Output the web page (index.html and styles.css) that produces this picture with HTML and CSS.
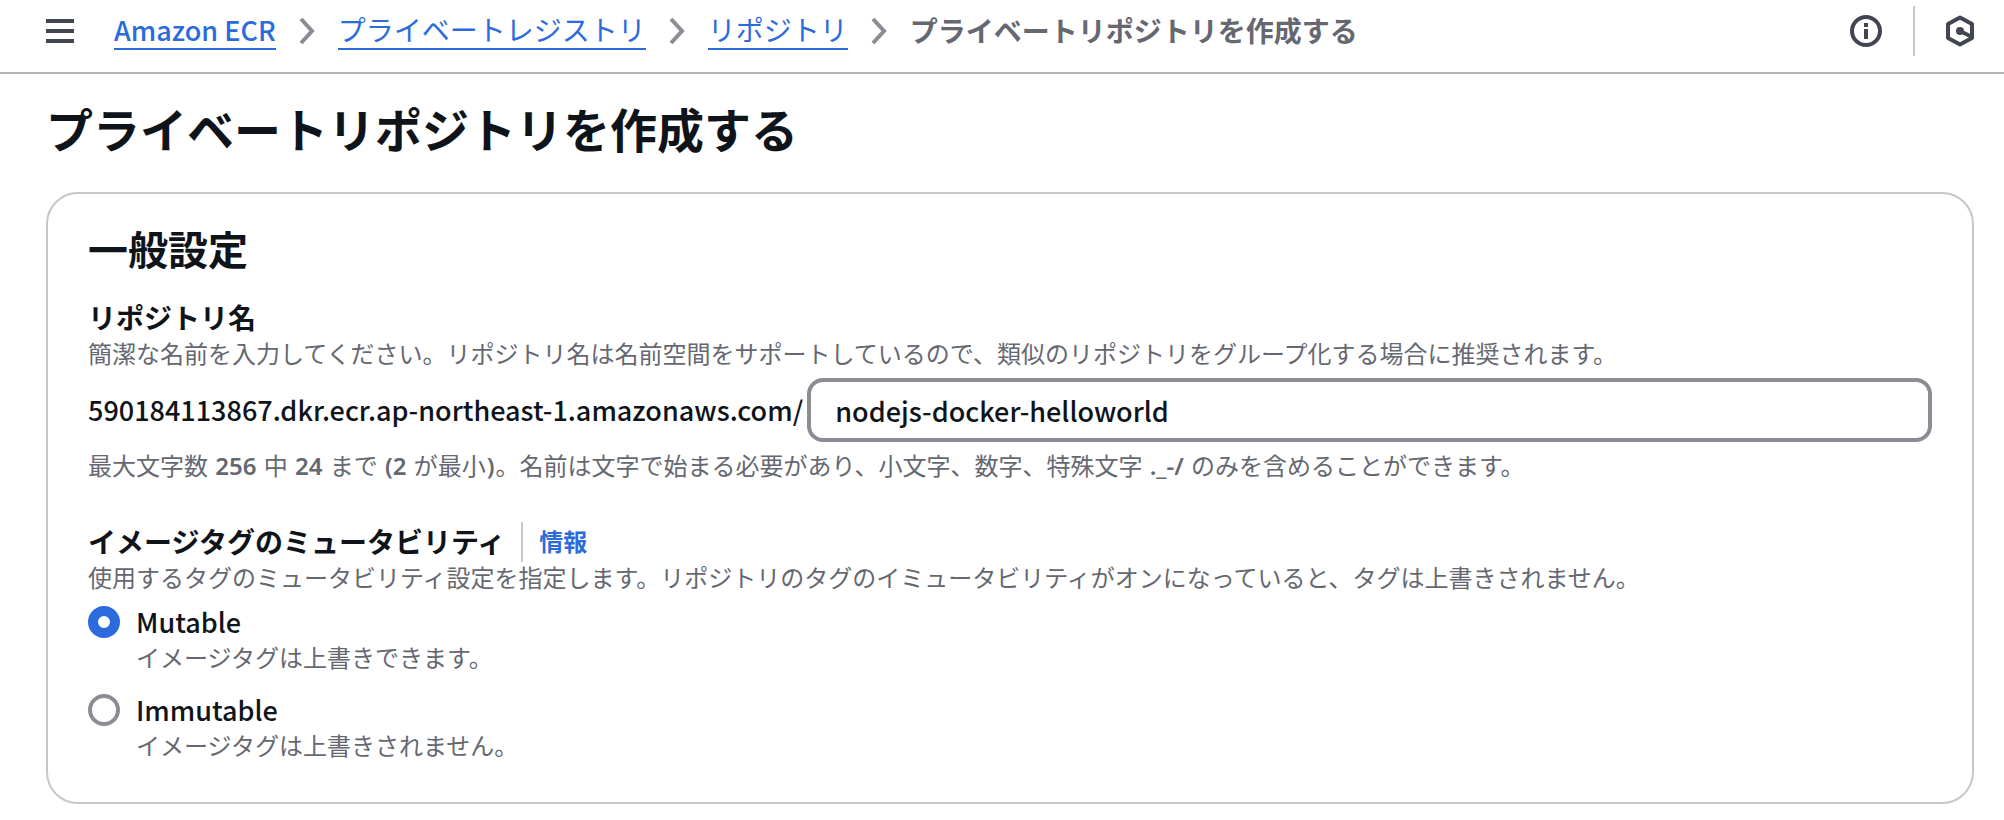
FILE: index.html
```html
<!DOCTYPE html>
<html lang="ja">
<head>
<meta charset="utf-8">
<meta name="viewport" content="width=device-width, initial-scale=1">
<title>プライベートリポジトリを作成する</title>
<link rel="stylesheet" href="styles.css">
</head>
<body>
<header class="topbar">
  <button class="icon-button menu-button" type="button" aria-label="メニュー">
    <svg width="28" height="24" viewBox="0 0 28 24" fill="none" stroke="currentColor" stroke-width="4"><path d="M0 2h28M0 12h28M0 22h28"/></svg>
  </button>
  <nav class="breadcrumbs" aria-label="パンくずリスト">
    <a class="crumb latin" href="#">Amazon ECR</a>
    <svg class="chevron" width="16" height="26" viewBox="0 0 16 26" fill="none" stroke="currentColor" stroke-width="4"><path d="M2 1l11 12L2 25"/></svg>
    <a class="crumb" href="#">プライベートレジストリ</a>
    <svg class="chevron" width="16" height="26" viewBox="0 0 16 26" fill="none" stroke="currentColor" stroke-width="4"><path d="M2 1l11 12L2 25"/></svg>
    <a class="crumb" href="#">リポジトリ</a>
    <svg class="chevron" width="16" height="26" viewBox="0 0 16 26" fill="none" stroke="currentColor" stroke-width="4"><path d="M2 1l11 12L2 25"/></svg>
    <span class="crumb-current" aria-current="page">プライベートリポジトリを作成する</span>
  </nav>
  <div class="tools">
    <button class="icon-button" type="button" aria-label="情報パネル">
      <svg width="32" height="32" viewBox="0 0 32 32" fill="none" stroke="currentColor" stroke-width="4"><circle cx="16" cy="16" r="14"/><path d="M16 8v4M16 14v10"/></svg>
    </button>
    <span class="tools-divider"></span>
    <button class="icon-button" type="button" aria-label="ツール">
      <svg width="28" height="32" viewBox="0 0 28 32" fill="none" stroke="currentColor" stroke-width="4" stroke-linejoin="round"><path d="M14 2.500L26 9v14L14 29.500L2 23V9z"/><path d="M14 16l12 6"/><circle cx="14" cy="16" r="4" fill="currentColor" stroke="none"/></svg>
    </button>
  </div>
</header>
<main class="page">
  <h1 class="page-title">プライベートリポジトリを作成する</h1>
  <section class="card">
    <h2 class="card-title">一般設定</h2>
    <div class="field">
      <label class="field-label" for="repo-name">リポジトリ名</label>
      <p class="hint">簡潔な名前を入力してください。リポジトリ名は名前空間をサポートしているので、類似のリポジトリをグループ化する場合に推奨されます。</p>
      <div class="name-row">
        <span class="name-prefix latin">590184113867.dkr.ecr.ap-northeast-1.amazonaws.com/</span>
        <input class="name-input latin" id="repo-name" type="text" value="nodejs-docker-helloworld">
      </div>
      <p class="hint">最大文字数 <span class="strong">256</span> 中 <span class="strong">24</span> まで <span class="strong">(2</span> が最小<span class="strong">)</span>。名前は文字で始まる必要があり、小文字、数字、特殊文字 <span class="strong">._-/</span> のみを含めることができます。</p>
    </div>
    <div class="field" role="radiogroup" aria-labelledby="mutability-label">
      <div class="label-row">
        <span class="field-label" id="mutability-label">イメージタグのミュータビリティ</span>
        <a class="info-link" href="#">情報</a>
      </div>
      <p class="hint">使用するタグのミュータビリティ設定を指定します。リポジトリのタグのイミュータビリティがオンになっていると、タグは上書きされません。</p>
      <div class="options">
        <div class="option">
          <input class="radio" type="radio" name="mutability" id="mutable" checked>
          <label class="option-text" for="mutable"><span class="option-name latin">Mutable</span><span class="hint">イメージタグは上書きできます。</span></label>
        </div>
        <div class="option">
          <input class="radio" type="radio" name="mutability" id="immutable">
          <label class="option-text" for="immutable"><span class="option-name latin">Immutable</span><span class="hint">イメージタグは上書きされません。</span></label>
        </div>
      </div>
    </div>
  </section>
</main>
</body>
</html>
```
FILE: styles.css
```css
* {
  box-sizing: border-box;
}

body {
  margin: 0;
  background: #fff;
  color: #0f141a;
  font-family: "Noto Sans", "Noto Sans CJK JP", sans-serif;
  font-size: 28px;
  line-height: 40px;
}

h1, h2, p {
  margin: 0;
}

.topbar {
  display: flex;
  align-items: center;
  padding: 6px 30px 16px 46px;
  border-bottom: 2px solid #b4b4bb;
}

.icon-button {
  display: flex;
  padding: 0;
  border: 0;
  background: none;
  color: #424650;
}

.menu-button {
  margin-right: 40px;
}

.breadcrumbs {
  display: flex;
  flex: 1;
  align-items: center;
  gap: 23px;
  white-space: nowrap;
}

.crumb {
  height: 38px;
  border-bottom: 2px solid #2b6bdb;
  color: #2b6bdb;
  line-height: 36px;
  text-decoration: none;
}

.chevron {
  color: #8c8c94;
}

.crumb-current {
  color: #656871;
  font-weight: 700;
}

.tools {
  display: flex;
  align-items: center;
  gap: 31px;
}

.tools-divider {
  width: 2px;
  height: 50px;
  background: #c6c6cd;
}

.page {
  padding: 26px 30px 16px 46px;
}

.page-title {
  margin-bottom: 32px;
  font-size: 47px;
  font-weight: 700;
  line-height: 60px;
}

.card {
  padding: 32px 40px 40px;
  border: 2px solid #c6c6cd;
  border-radius: 32px;
}

.card-title {
  margin-bottom: 24px;
  font-size: 40px;
  font-weight: 700;
  line-height: 48px;
}

.field + .field {
  margin-top: 40px;
}

.field-label {
  display: block;
  font-weight: 700;
}

.hint {
  display: block;
  color: #656871;
  font-size: 24px;
  line-height: 32px;
}

.strong {
  margin: 0 1px;
  font-weight: 600;
}

.name-row {
  display: flex;
  align-items: center;
  gap: 4px;
  margin: 8px 0;
}

.name-input {
  flex: 1;
  min-width: 0;
  height: 64px;
  padding: 0 24px;
  border: 4px solid #8c8c94;
  border-radius: 16px;
  background: #fff;
  color: inherit;
}

.latin {
  font-family: "Noto Sans CJK JP", sans-serif;
  font-size: 27px;
  font-weight: 500;
}

.label-row {
  display: flex;
}

.info-link {
  margin-left: 16px;
  padding-left: 16px;
  border-left: 2px solid #c6c6cd;
  color: #2b6bdb;
  font-size: 24px;
  font-weight: 700;
  text-decoration: none;
}

.options {
  display: grid;
  gap: 16px;
  margin-top: 8px;
}

.option {
  display: flex;
  gap: 16px;
}

.radio {
  width: 32px;
  height: 32px;
  margin: 4px 0;
  border: 4px solid #8c8c94;
  border-radius: 50%;
  appearance: none;
}

.radio:checked {
  border: 10px solid #2b6bdb;
}

.option-name {
  display: block;
}
```
